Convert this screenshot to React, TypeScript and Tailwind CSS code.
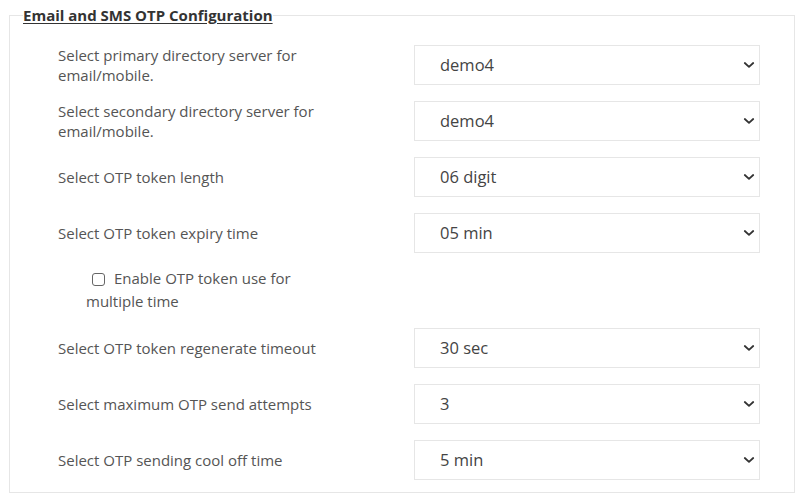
import React from "react";

type Row = { label: string; value: string };

const rowsTop: Row[] = [
  { label: "Select primary directory server for email/mobile.", value: "demo4" },
  { label: "Select secondary directory server for email/mobile.", value: "demo4" },
  { label: "Select OTP token length", value: "06 digit" },
  { label: "Select OTP token expiry time", value: "05 min" },
];

const rowsBottom: Row[] = [
  { label: "Select OTP token regenerate timeout", value: "30 sec" },
  { label: "Select maximum OTP send attempts", value: "3" },
  { label: "Select OTP sending cool off time", value: "5 min" },
];

const FONT = '"Open Sans", "Noto Sans", sans-serif';

function SelectBox({ value }: { value: string }) {
  return (
    <div className="relative w-[346px] h-[40px]">
      <select
        defaultValue={value}
        className="appearance-none w-full h-full border border-[#e6e6e6] bg-white pl-[25px] pr-10 text-[16.5px] text-[#444] outline-none"
        style={{ fontFamily: FONT }}
      >
        <option value={value}>{value}</option>
      </select>
      <svg
        className="absolute right-[5px] top-1/2 -translate-y-1/2 pointer-events-none"
        width="12"
        height="8"
        viewBox="0 0 12 8"
        fill="none"
      >
        <path d="M1.8 2 L6 5.8 L10.2 2" stroke="#333" strokeWidth="1.8" strokeLinecap="round" strokeLinejoin="round" />
      </svg>
    </div>
  );
}

function FormRow({ row }: { row: Row }) {
  return (
    <div className="flex items-center">
      <div className="w-[356px] pr-[50px] text-[15px] leading-[20px] text-[#555]">{row.label}</div>
      <SelectBox value={row.value} />
    </div>
  );
}

export default function App() {
  return (
    <div className="w-[800px] h-[499px] bg-white pl-[9px] pr-[5px] pt-[5px]" style={{ fontFamily: FONT }}>
      <fieldset className="border border-[#e6e6e6] px-0 pt-0 pb-[12px]">
        <legend className="ml-[13px] px-0 text-[15px] leading-[20px] font-bold text-[#333] underline underline-offset-[2px]">
          Email and SMS OTP Configuration
        </legend>
        <div className="flex flex-col gap-[16px] pl-[48px] pr-[34px] pt-[20px]">
          {rowsTop.map((r, i) => (
            <FormRow key={"t" + i} row={r} />
          ))}
          <div className="-mt-[2px] h-[45px] pl-[28px] w-[270px] text-[15px] leading-[23px] text-[#555]">
            <label className="cursor-pointer">
              <input
                type="checkbox"
                className="appearance-none align-[-2px] w-[13px] h-[13px] border border-[#666] rounded-[3px] bg-white ml-[6px] mr-[9px]"
              />
              Enable OTP token use for multiple time
            </label>
          </div>
          {rowsBottom.map((r, i) => (
            <FormRow key={"b" + i} row={r} />
          ))}
        </div>
      </fieldset>
    </div>
  );
}
